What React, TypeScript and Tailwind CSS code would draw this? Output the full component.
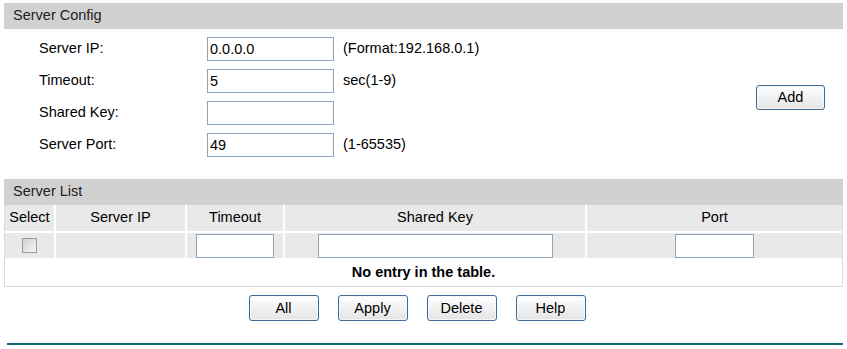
import React from "react";

const FONT = { fontFamily: '"Liberation Sans", Arial, sans-serif' };

const Btn = ({ label, w = "w-[70px]", h = "h-[26px]" }: { label: string; w?: string; h?: string }) => (
  <button
    className={`${w} ${h} rounded-[3px] border border-[#3f6a96] bg-gradient-to-b from-white to-[#e4e4e4] text-[14.5px] text-black leading-none shadow-[inset_0_0_0_1px_#f7f7f7]`}
  >
    {label}
  </button>
);

const TextBox = ({ value = "", w }: { value?: string; w: string }) => (
  <input
    readOnly
    value={value}
    className={`${w} h-[24px] border border-[#8fa4ba] bg-white px-[2px] text-[14.5px] text-black outline-none`}
  />
);

const ConfigRow = ({ label, value, hint }: { label: string; value: string; hint?: string }) => (
  <div className="flex h-[32px] items-center">
    <span className="w-[203px] pl-[35px] text-[14.5px]">{label}</span>
    <TextBox value={value} w="w-[127px]" />
    {hint && <span className="ml-[9px] text-[14.5px]">{hint}</span>}
  </div>
);

const App = () => {
  return (
    <div className="w-[847px] h-[349px] bg-white px-[4px] pt-[3px] text-black" style={FONT}>
      {/* server config */}
      <div className="h-[26px] bg-[#d1d1d1] pl-[9px] flex items-center text-[14.5px] text-[#222]">Server Config</div>
      <div className="flex pt-[4px]">
        <div className="flex-1 flex flex-col">
          <ConfigRow label="Server IP:" value="0.0.0.0" hint="(Format:192.168.0.1)" />
          <ConfigRow label="Timeout:" value="5" hint="sec(1-9)" />
          <ConfigRow label="Shared Key:" value="" />
          <ConfigRow label="Server Port:" value="49" hint="(1-65535)" />
        </div>
        <div className="flex items-center pr-[18px]">
          <Btn label="Add" w="w-[69px]" h="h-[25px]" />
        </div>
      </div>

      {/* server list */}
      <div className="mt-[18px] h-[26px] bg-[#d1d1d1] pl-[9px] flex items-center text-[14.5px] text-[#222]">Server List</div>
      <div className="border-x border-b border-[#dcdcdc]">
        <div className="grid grid-cols-[49px_129px_96px_300px_1fr] gap-x-[2px] gap-y-[2px] text-[14.5px]">
          {["Select", "Server IP", "Timeout", "Shared Key", "Port"].map((h) => (
            <div key={h} className="h-[26px] bg-[#e9e9e9] flex items-center justify-center">
              {h}
            </div>
          ))}
          <div className="h-[25px] bg-[#e9e9e9] flex items-center justify-center">
            <span className="w-[15px] h-[15px] border border-[#9a9a9a] bg-gradient-to-br from-[#cfcfcf] to-[#f6f6f6]" />
          </div>
          <div className="h-[25px] bg-[#e9e9e9]" />
          <div className="h-[25px] bg-[#e9e9e9] flex items-center justify-center">
            <TextBox w="w-[78px]" />
          </div>
          <div className="h-[25px] bg-[#e9e9e9] flex items-center justify-center">
            <TextBox w="w-[235px]" />
          </div>
          <div className="h-[25px] bg-[#e9e9e9] flex items-center justify-center">
            <TextBox w="w-[79px]" />
          </div>
        </div>
        <div className="mt-[1px] h-[27px] flex items-center justify-center text-[14.5px] font-bold">
          No entry in the table.
        </div>
      </div>

      <div className="mt-[8px] flex justify-center gap-[19px] pr-[13px]">
        <Btn label="All" />
        <Btn label="Apply" />
        <Btn label="Delete" />
        <Btn label="Help" />
      </div>

      <div className="mt-[22px] ml-[3px] h-[2px] bg-[#156878]" />
    </div>
  );
};

export default App;
